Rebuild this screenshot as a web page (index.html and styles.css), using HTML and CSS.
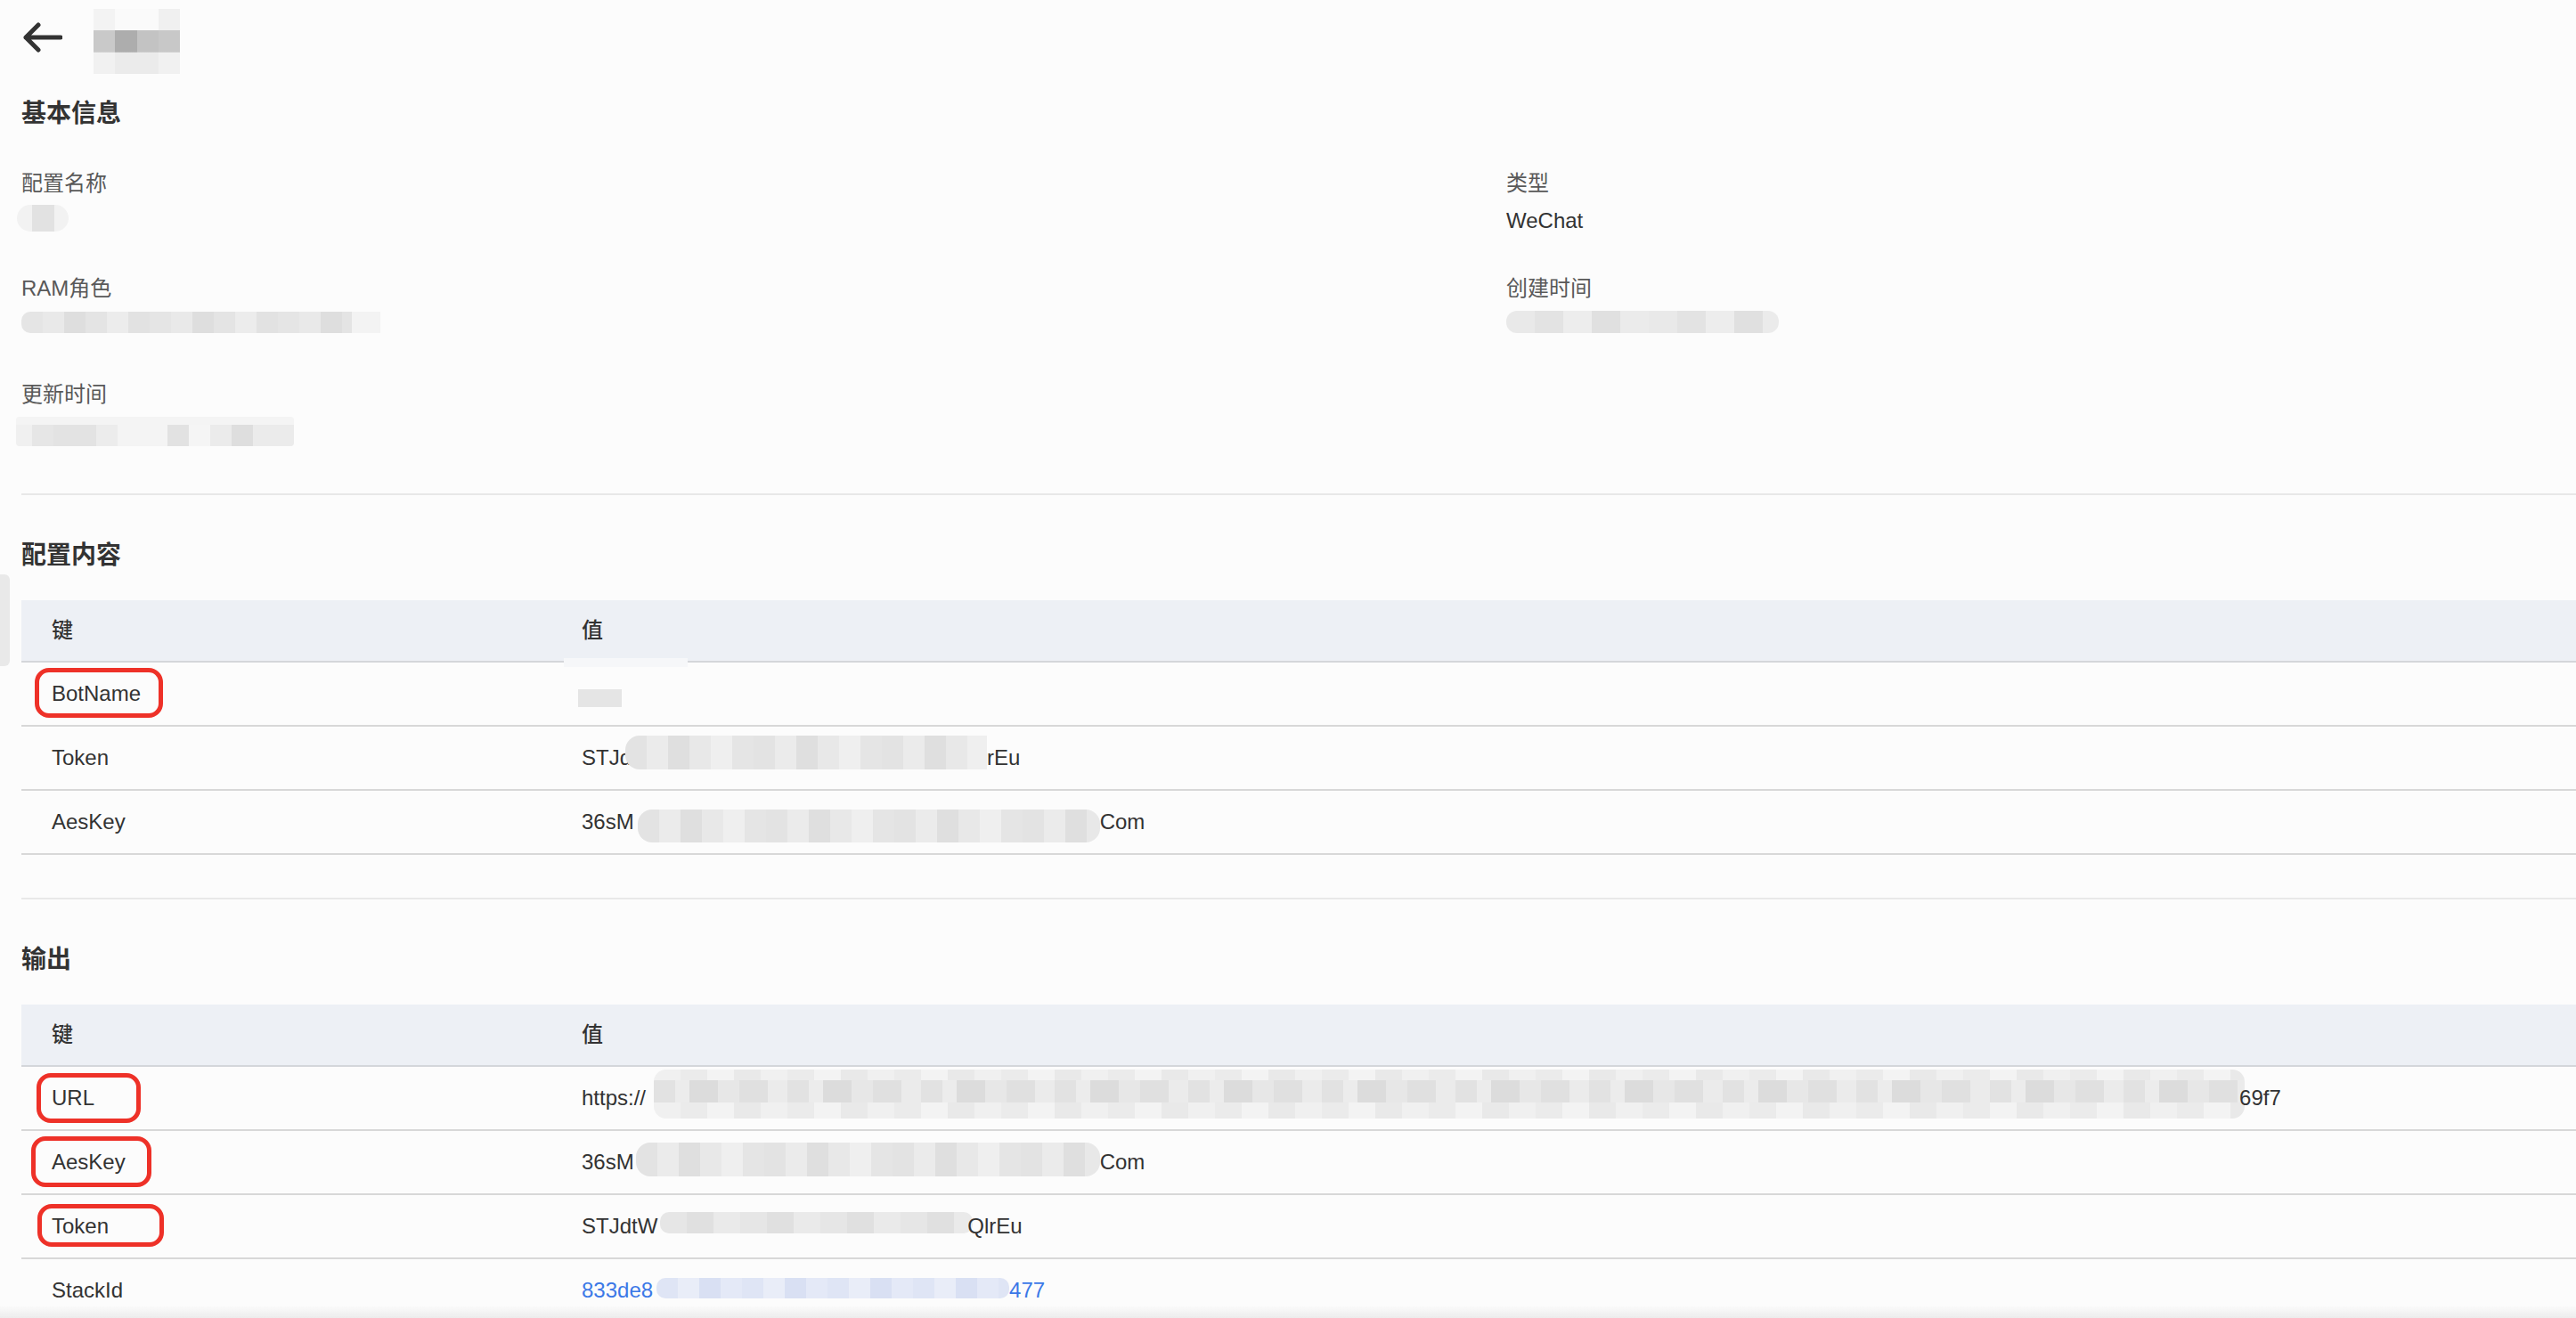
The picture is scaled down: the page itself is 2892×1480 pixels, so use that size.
FILE: index.html
```html
<!DOCTYPE html>
<html lang="zh-CN">
<head>
    <meta charset="UTF-8">
    <meta name="viewport" content="width=device-width, initial-scale=1.0">
    <title>配置详情</title>
    <link rel="stylesheet" href="styles.css">
</head>
<body>
    <div class="page">
        <div class="topbar">
            <svg class="back" width="46" height="36" viewBox="0 0 46 36" fill="none">
                <path d="M44 18H5M19 4L5 18l14 14" stroke="#333" stroke-width="5" stroke-linecap="round" stroke-linejoin="round"/>
            </svg>
            <div class="mosaic title-blur"></div>
        </div>

        <h2 class="section-title basic-title">基本信息</h2>
        <div class="info-grid">
            <div class="field">
                <div class="label">配置名称</div>
                <div class="value"><span class="mosaic name-blur"></span></div>
            </div>
            <div class="field">
                <div class="label">类型</div>
                <div class="value">WeChat</div>
            </div>
            <div class="field">
                <div class="label">RAM角色</div>
                <div class="value"><span class="mosaic ram-blur"></span></div>
            </div>
            <div class="field">
                <div class="label">创建时间</div>
                <div class="value"><span class="mosaic created-blur"></span></div>
            </div>
            <div class="field">
                <div class="label">更新时间</div>
                <div class="value"><span class="mosaic updated-blur"></span></div>
            </div>
        </div>

        <hr class="divider first-divider">

        <h2 class="section-title">配置内容</h2>
        <table class="kv-table">
            <thead>
                <tr>
                    <th class="key-h">键</th>
                    <th class="val-h patched">值</th>
                </tr>
            </thead>
            <tbody>
                <tr>
                    <td><span class="mark mark-botname">BotName</span></td>
                    <td><div class="val"><span class="mosaic botname-blur"></span></div></td>
                </tr>
                <tr>
                    <td>Token</td>
                    <td><div class="val">STJd<span class="mosaic cfg-token-blur"></span>rEu</div></td>
                </tr>
                <tr>
                    <td>AesKey</td>
                    <td><div class="val">36sM<span class="mosaic cfg-aes-blur"></span>Com</div></td>
                </tr>
            </tbody>
        </table>

        <hr class="divider">

        <h2 class="section-title">输出</h2>
        <table class="kv-table">
            <thead>
                <tr>
                    <th class="key-h">键</th>
                    <th class="val-h">值</th>
                </tr>
            </thead>
            <tbody>
                <tr>
                    <td><span class="mark mark-url">URL</span></td>
                    <td><div class="val">https://<span class="mosaic url-blur"></span><span class="tail-url">69f7</span></div></td>
                </tr>
                <tr>
                    <td><span class="mark mark-aes">AesKey</span></td>
                    <td><div class="val">36sM<span class="mosaic out-aes-blur"></span>Com</div></td>
                </tr>
                <tr>
                    <td><span class="mark mark-token">Token</span></td>
                    <td><div class="val">STJdtW<span class="mosaic out-token-blur"></span><span class="tail-token">QlrEu</span></div></td>
                </tr>
                <tr>
                    <td>StackId</td>
                    <td><div class="val link">833de8<span class="mosaic stack-blur"></span>477</div></td>
                </tr>
            </tbody>
        </table>
    </div>

    <div class="side-tab"></div>
    <div class="bottom-fade"></div>
</body>
</html>
```

FILE: styles.css
```css
* {
    box-sizing: border-box;
}
body {
    margin: 0;
    background-color: #fcfcfc;
    color: #333;
    font-family: "Liberation Sans", "Noto Sans CJK SC", sans-serif;
    font-size: 24px;
    line-height: 34px;
    overflow: hidden;
}
.page {
    padding-left: 24px;
}

/* redacted bits, base look */
.mosaic {
    display: block;
    border-radius: 12px;
    background: repeating-linear-gradient(90deg, #e3e3e3 0 24px, #ebebeb 24px 48px, #dfdfdf 48px 72px, #e8e8e8 72px 96px, #efefef 96px 120px, #e5e5e5 120px 144px);
    flex-shrink: 0;
}

/* top bar */
.topbar {
    display: flex;
    align-items: flex-start;
    height: 83px;
    padding-top: 10px;
}
.back {
    margin-top: 14px;
    flex-shrink: 0;
}
.title-blur {
    width: 97px;
    height: 73px;
    margin-left: 35px;
    border-radius: 0;
    background:
        linear-gradient(90deg, #c9c9c9 0 25%, #adadad 25% 50%, #c3c3c3 50% 75%, #c8c8c8 75%) 0 50% / 100% 34% no-repeat,
        linear-gradient(90deg, #f3f3f3 0 25%, #fafafa 25% 75%, #f0f0f0 75%) 0 0 / 100% 33% no-repeat,
        linear-gradient(90deg, #f1f1f1 0 25%, #ebebeb 25% 75%, #f1f1f1 75%) 0 100% / 100% 33% no-repeat;
}

/* headings */
.section-title {
    margin: 48px 0 0;
    font-size: 28px;
    line-height: 40px;
    font-weight: 600;
    color: #333;
}
.basic-title {
    margin-top: 25px;
}

/* basic info */
.info-grid {
    display: grid;
    grid-template-columns: 1667px 1fr;
    row-gap: 42px;
    margin-top: 41px;
}
.label {
    color: #595959;
    line-height: 34px;
}
.value {
    margin-top: 8px;
    min-height: 34px;
    color: #333;
}

.name-blur {
    width: 58px;
    height: 30px;
    margin-left: -5px;
    margin-top: -1px;
    border-radius: 15px;
    background: linear-gradient(90deg, #f2f2f2 0 30%, #e2e2e2 30% 72%, #f2f2f2 72%);
}
.ram-blur {
    width: 403px;
    height: 24px;
    margin-top: 9px;
    border-radius: 10px 0 0 10px;
    background:
        linear-gradient(90deg, transparent 0 92%, #f3f3f3 92%),
        repeating-linear-gradient(90deg, #e5e5e5 0 24px, #e9e9e9 24px 48px, #dedede 48px 72px, #e4e4e4 72px 96px, #ececec 96px 120px, #e2e2e2 120px 144px);
}
.created-blur {
    width: 306px;
    height: 25px;
    margin-top: 8px;
    border-radius: 12px;
    background: repeating-linear-gradient(90deg, #e9e9e9 0 32px, #e3e3e3 32px 64px, #ededed 64px 96px, #e0e0e0 96px 128px, #ebebeb 128px 160px);
}
.updated-blur {
    width: 312px;
    height: 33px;
    margin-top: 5px;
    margin-left: -6px;
    border-radius: 4px;
    background:
        linear-gradient(180deg, #f4f4f4 0 28%, transparent 28%),
        repeating-linear-gradient(90deg, #f0f0f0 0 18px, #e6e6e6 18px 42px, #e3e3e3 42px 90px, #ececec 90px 114px, #f4f4f4 114px 170px, #e2e2e2 170px 194px, #f5f5f5 194px 218px, #ebebeb 218px 242px, #dedede 242px 266px, #ebebeb 266px 312px);
}

/* divider */
.divider {
    margin: 48px 0 0;
    border: none;
    border-top: 2px solid #e8e8e8;
    height: 0;
}
.first-divider {
    margin-top: 52px;
}

/* tables */
.kv-table {
    width: 100%;
    margin-top: 30px;
    border-collapse: separate;
    border-spacing: 0;
    table-layout: fixed;
}
.kv-table th {
    padding: 17px 34px;
    text-align: left;
    font-weight: 500;
    color: #333;
    background-color: #edf0f5;
    border-bottom: 2px solid #d4d6da;
}
.kv-table .key-h {
    width: 595px;
}
.kv-table .patched {
    position: relative;
}
.kv-table .patched::after {
    content: "";
    position: absolute;
    left: 14px;
    bottom: -7px;
    width: 139px;
    height: 10px;
    background-color: #f6f7f9;
}
.kv-table td {
    padding: 18px 34px;
    border-bottom: 2px solid #d8d8d8;
    color: #333;
    white-space: nowrap;
}
.val {
    display: flex;
    align-items: center;
    height: 34px;
}
.link {
    color: #3b78e7;
}

.botname-blur {
    width: 49px;
    height: 20px;
    margin: 10px 0 0 -4px;
    border-radius: 0;
    background: #e5e5e5;
}
.cfg-token-blur {
    width: 406px;
    height: 38px;
    margin: -12px 0 0 -7px;
    border-radius: 16px 0 0 16px;
}
.cfg-aes-blur {
    width: 519px;
    height: 37px;
    margin: 8px 0 0 4px;
    border-radius: 16px;
}
.url-blur {
    width: 1786px;
    height: 55px;
    margin: -10px 0 0 9px;
    border-radius: 14px;
    background:
        repeating-linear-gradient(90deg, #e2e2e2 0 24px, #ececec 24px 40px, #dcdcdc 40px 72px, #e7e7e7 72px 96px, #e0e0e0 96px 128px, #ebebeb 128px 150px) 0 12px / 100% 25px no-repeat,
        repeating-linear-gradient(90deg, #f0f0f0 0 30px, #ebebeb 30px 60px, #f3f3f3 60px 90px, #e9e9e9 90px 120px);
}
.tail-url {
    margin-left: -6px;
}
.out-aes-blur {
    width: 521px;
    height: 38px;
    margin: -6px 0 0 2px;
    border-radius: 16px;
}
.out-token-blur {
    width: 351px;
    height: 24px;
    margin: -8px 0 0 3px;
    border-radius: 10px;
    background: repeating-linear-gradient(90deg, #e6e6e6 0 30px, #e0e0e0 30px 60px, #eaeaea 60px 90px);
}
.tail-token {
    margin-left: -6px;
}
.stack-blur {
    width: 396px;
    height: 23px;
    margin: -6px 0 0 4px;
    border-radius: 10px;
    background: repeating-linear-gradient(90deg, #dfe5f5 0 24px, #e9edf8 24px 48px, #d9e0f3 48px 72px, #e4e9f7 72px 96px);
}

/* annotation boxes */
.mark {
    position: relative;
    display: inline-block;
}
.mark::before {
    content: "";
    position: absolute;
    border: 5px solid #ee3128;
    border-radius: 16px;
}
.mark-botname::before {
    top: -12px;
    bottom: -10px;
    left: -19px;
    right: -25px;
}
.mark-url::before {
    top: -11px;
    bottom: -11px;
    left: -17px;
    right: -52px;
}
.mark-aes::before {
    top: -12px;
    bottom: -11px;
    left: -23px;
    right: -29px;
}
.mark-token::before {
    top: -8px;
    bottom: -6px;
    left: -16px;
    right: -62px;
}

/* page chrome overlays */
.side-tab {
    position: fixed;
    left: 0;
    top: 645px;
    width: 11px;
    height: 103px;
    background-color: #e9e9e9;
    border-radius: 0 6px 6px 0;
}
.bottom-fade {
    position: fixed;
    left: 0;
    right: 0;
    bottom: 0;
    height: 14px;
    background: linear-gradient(180deg, rgba(238, 238, 238, 0), #ececec);
}
```
